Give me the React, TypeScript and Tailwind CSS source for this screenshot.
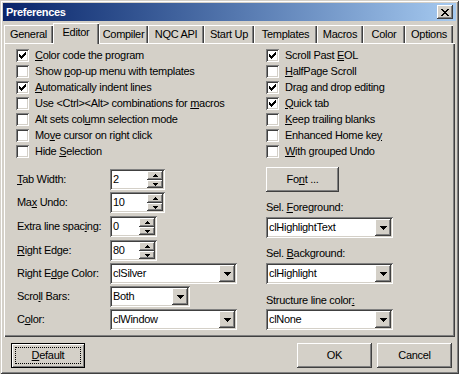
import type { ReactNode } from "react";

const raised =
  "shadow-[inset_-1px_-1px_#404040,inset_1px_1px_#ffffff,inset_-2px_-2px_#808080,inset_2px_2px_#d4d0c8]";
const sunken =
  "shadow-[inset_1px_1px_#808080,inset_-1px_-1px_#ffffff,inset_2px_2px_#404040,inset_-2px_-2px_#d4d0c8]";

const tabs = [
  { label: "General", w: "w-[49px]" },
  { label: "Editor", w: "w-[46px]", active: true },
  { label: "Compiler", w: "w-[49px]" },
  { label: "NQC API", w: "w-[56px]" },
  { label: "Start Up", w: "w-[50px]" },
  { label: "Templates", w: "w-[63px]" },
  { label: "Macros", w: "w-[46px]" },
  { label: "Color", w: "w-[42px]" },
  { label: "Options", w: "w-[48px]" },
];

function Tab({ label, w, active }: { label: string; w: string; active?: boolean }) {
  if (active) {
    return (
      <div
        className={`relative z-10 -mb-[1px] flex h-[21px] ${w} justify-center bg-[#d4d0c8] pt-[3px] leading-[13px] shadow-[inset_1px_1px_#ffffff,inset_-1px_0_#404040,inset_-2px_0_#808080]`}
      >
        {label}
      </div>
    );
  }
  return (
    <div
      className={`flex h-[18px] ${w} justify-center pt-[3px] leading-[13px] shadow-[inset_1px_1px_#ffffff,inset_-1px_0_#404040,inset_-2px_0_#808080]`}
    >
      {label}
    </div>
  );
}

function Check({ checked, children }: { checked?: boolean; children: ReactNode }) {
  return (
    <div className="flex h-[16px] items-center">
      <div className={`flex h-[13px] w-[13px] items-center justify-center bg-white ${sunken}`}>
        {checked && (
          <svg width="7" height="7" viewBox="0 0 7 7" shapeRendering="crispEdges">
            <path d="M0 2h1v1h1v1h1v-1h1v-1h1v-1h1v-1h1v3h-1v1h-1v1h-1v1h-1v1h-1v-1h-1v-1h-1z" fill="#000" />
          </svg>
        )}
      </div>
      <span className="ml-[6px] leading-[13px]">{children}</span>
    </div>
  );
}

function Arrow({ up }: { up?: boolean }) {
  return (
    <svg width="5" height="3" viewBox="0 0 5 3" shapeRendering="crispEdges">
      <path d={up ? "M2 0h1v1h1v1h1v1h-5v-1h1v-1h1z" : "M0 0h5v1h-1v1h-1v1h-1v-1h-1v-1h-1z"} fill="#000" />
    </svg>
  );
}

function Spin({ value, w }: { value: string; w: string }) {
  return (
    <div className={`flex h-[21px] ${w} bg-white p-[2px] ${sunken}`}>
      <span className="flex-1 pl-[1px] leading-[17px]">{value}</span>
      <div className="flex w-[16px] flex-col">
        <div className={`flex h-[9px] items-center justify-center bg-[#d4d0c8] ${raised}`}>
          <Arrow up />
        </div>
        <div className={`flex h-[8px] items-center justify-center bg-[#d4d0c8] ${raised}`}>
          <Arrow />
        </div>
      </div>
    </div>
  );
}

function Combo({ value, w }: { value: string; w: string }) {
  return (
    <div className={`flex h-[21px] ${w} bg-white p-[2px] ${sunken}`}>
      <span className="flex-1 pl-[1px] leading-[17px]">{value}</span>
      <div className={`flex w-[16px] items-center justify-center bg-[#d4d0c8] ${raised}`}>
        <svg width="7" height="4" viewBox="0 0 7 4" shapeRendering="crispEdges">
          <path d="M0 0h7v1h-1v1h-1v1h-1v1h-1v-1h-1v-1h-1v-1h-1z" fill="#000" />
        </svg>
      </div>
    </div>
  );
}

function Row({ label, mt, children }: { label: ReactNode; mt: string; children: ReactNode }) {
  return (
    <div className={`flex h-[21px] items-center ${mt}`}>
      <span className="w-[94px] pl-[1px] leading-[13px]">{label}</span>
      {children}
    </div>
  );
}

export default function App() {
  return (
    <div className="flex h-[374px] w-[459px] select-none flex-col bg-[#d4d0c8] p-[3px] font-['Liberation_Sans',Arial,sans-serif] text-[11px] tracking-[-0.3px] text-black shadow-[inset_1px_1px_#d4d0c8,inset_-1px_-1px_#404040,inset_2px_2px_#ffffff,inset_-2px_-2px_#808080]">
      {/* title bar */}
      <div className="flex h-[18px] items-center bg-linear-to-r from-[#0a246a] to-[#a6caf0] pl-[3px] pr-[3px]">
        <span className="flex-1 font-bold leading-[13px] text-white">Preferences</span>
        <div className={`flex h-[14px] w-[16px] items-center justify-center bg-[#d4d0c8] ${raised}`}>
          <svg width="8" height="7" viewBox="0 0 8 7" shapeRendering="crispEdges">
            <path
              d="M0 0h2v1h1v1h2v-1h1v-1h2v1h-1v1h-1v1h-1v1h1v1h1v1h1v1h-2v-1h-1v-1h-2v1h-1v1h-2v-1h1v-1h1v-1h1v-1h-1v-1h-1v-1h-1z"
              fill="#000"
            />
          </svg>
        </div>
      </div>

      <div className="flex flex-col px-[1px]">
        {/* tabs */}
        <div className="mt-[2px] flex h-[20px] items-end">
          {tabs.map((t) => (
            <Tab key={t.label} label={t.label} w={t.w} active={t.active} />
          ))}
        </div>

        {/* panel */}
        <div className="flex h-[294px] pl-[12px] pt-[4px] shadow-[inset_1px_1px_#ffffff,inset_-1px_-1px_#404040,inset_-2px_-2px_#808080]">
          <div className="flex w-[250px] flex-col">
            <Check checked>
              <u>C</u>olor code the program
            </Check>
            <Check>
              Show <u>p</u>op-up menu with templates
            </Check>
            <Check checked>
              <u>A</u>utomatically indent lines
            </Check>
            <Check>
              Use &lt;Ctrl&gt;&lt;Alt&gt; combinations for <u>m</u>acros
            </Check>
            <Check>
              Alt sets col<u>u</u>mn selection mode
            </Check>
            <Check>
              Mo<u>v</u>e cursor on right click
            </Check>
            <Check>
              Hide <u>S</u>election
            </Check>

            <Row mt="mt-[10px]" label={<><u>T</u>ab Width:</>}>
              <Spin value="2" w="w-[55px]" />
            </Row>
            <Row mt="mt-[2px]" label={<>Ma<u>x</u> Undo:</>}>
              <Spin value="10" w="w-[55px]" />
            </Row>
            <Row mt="mt-[3px]" label={<>Extra line spac<u>i</u>ng:</>}>
              <Spin value="0" w="w-[47px]" />
            </Row>
            <Row mt="mt-[3px]" label={<><u>R</u>ight Edge:</>}>
              <Spin value="80" w="w-[47px]" />
            </Row>
            <Row mt="mt-[2px]" label={<>Right E<u>d</u>ge Color:</>}>
              <Combo value="clSilver" w="w-[127px]" />
            </Row>
            <Row mt="mt-[2px]" label={<>Scro<u>l</u>l Bars:</>}>
              <Combo value="Both" w="w-[80px]" />
            </Row>
            <Row mt="mt-[2px]" label={<>C<u>o</u>lor:</>}>
              <Combo value="clWindow" w="w-[127px]" />
            </Row>
          </div>

          <div className="flex flex-col">
            <Check checked>
              Scroll Past <u>E</u>OL
            </Check>
            <Check>
              <u>H</u>alfPage Scroll
            </Check>
            <Check checked>Drag and drop editing</Check>
            <Check checked>
              <u>Q</u>uick tab
            </Check>
            <Check>
              <u>K</u>eep trailing blanks
            </Check>
            <Check>
              Enhanced Home ke<u>y</u>
            </Check>
            <Check>
              <u>W</u>ith grouped Undo
            </Check>

            <div className={`mt-[8px] flex h-[25px] w-[73px] items-center justify-center leading-[13px] ${raised}`}>
              Fo<u>n</u>t ...
            </div>

            <span className="mt-[9px] h-[13px] leading-[13px]">
              Sel. <u>F</u>oreground:
            </span>
            <div className="mt-[3px]">
              <Combo value="clHighlightText" w="w-[127px]" />
            </div>
            <span className="mt-[9px] h-[13px] leading-[13px]">
              Sel. <u>B</u>ackground:
            </span>
            <div className="mt-[3px]">
              <Combo value="clHighlight" w="w-[127px]" />
            </div>
            <span className="mt-[10px] h-[13px] leading-[13px]">
              Structure line color<u>:</u>
            </span>
            <div className="mt-[2px]">
              <Combo value="clNone" w="w-[127px]" />
            </div>
          </div>
        </div>

        {/* buttons */}
        <div className="mt-[6px] flex h-[25px]">
          <div className="ml-[7px] flex w-[74px] border border-black shadow-[inset_1px_1px_#ffffff,inset_-1px_-1px_#808080] p-[3px]">
            <div className="flex flex-1 items-center justify-center border border-dotted border-black leading-[13px]">
              <u>D</u>efault
            </div>
          </div>
          <div className="flex-1" />
          <div className={`flex w-[75px] items-center justify-center leading-[13px] ${raised}`}>OK</div>
          <div className={`ml-[5px] mr-[3px] flex w-[75px] items-center justify-center leading-[13px] ${raised}`}>
            Cancel
          </div>
        </div>
      </div>
    </div>
  );
}
